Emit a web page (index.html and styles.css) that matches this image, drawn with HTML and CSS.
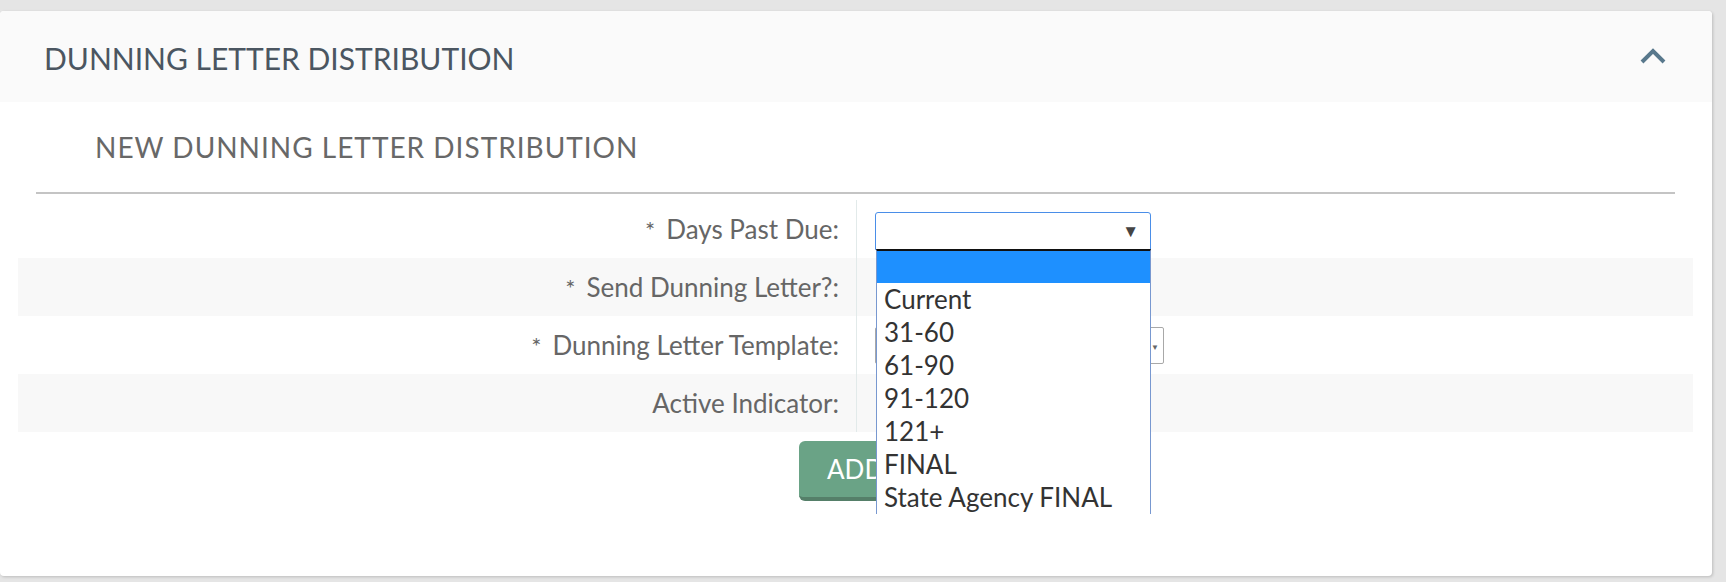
FILE: index.html
```html
<!DOCTYPE html>
<html lang="en">
<head>
  <meta charset="UTF-8">
  <meta name="viewport" content="width=device-width, initial-scale=1.0">
  <title>Dunning Letter Distribution</title>
  <link rel="stylesheet" href="styles.css">
</head>
<body>
  <div class="panel">
    <div class="panel-head">
      <h2>DUNNING LETTER DISTRIBUTION</h2>
      <svg class="chevron" width="26" height="16" viewBox="0 0 26 16">
        <path d="M2 14 L13 3 L24 14" fill="none" stroke="#58788c" stroke-width="4"/>
      </svg>
    </div>
    <div class="panel-body">
      <h3 class="sub-title">NEW DUNNING LETTER DISTRIBUTION</h3>
      <div class="form">
        <div class="row">
          <div class="label"><span class="req">*</span>Days Past Due:</div>
          <div class="field">
            <div class="select-wrap">
              <div class="select focused"><span class="arrow">&#9660;</span></div>
              <ul class="dropdown">
                <li class="active">&nbsp;</li>
                <li>Current</li>
                <li>31-60</li>
                <li>61-90</li>
                <li>91-120</li>
                <li>121+</li>
                <li>FINAL</li>
                <li>State Agency FINAL</li>
                <li>Collections</li>
              </ul>
            </div>
          </div>
        </div>
        <div class="row alt">
          <div class="label"><span class="req">*</span>Send Dunning Letter?:</div>
          <div class="field"></div>
        </div>
        <div class="row">
          <div class="label"><span class="req">*</span>Dunning Letter Template:</div>
          <div class="field">
            <div class="select wide"><span class="arrow small">&#9660;</span></div>
          </div>
        </div>
        <div class="row alt">
          <div class="label">Active Indicator:</div>
          <div class="field"></div>
        </div>
        <div class="actions">
          <button type="button">ADD</button>
        </div>
      </div>
    </div>
  </div>
</body>
</html>
```

FILE: styles.css
```css
body {
  background-color: #e5e5e5;
  font-family: Lato, "Open Sans", sans-serif;
  margin: 0;
  padding: 11px 14px 6px 0;
}
.panel {
  background-color: white;
  border-radius: 4px;
  box-shadow: 1px 1px 3px rgba(0, 0, 0, 0.18);
  height: 565px;
  overflow: hidden;
}
.panel-head {
  background-color: #fafafa;
  height: 91px;
  padding: 0 46px 0 44px;
  display: flex;
  align-items: center;
  justify-content: space-between;
}
.panel-head h2 {
  margin: 0;
  font-size: 30px;
  font-weight: normal;
  color: #4b5661;
  padding-top: 3px;
}
.chevron { margin-bottom: 1px; }
.panel-body { padding: 0 19px 0 18px; }
.sub-title {
  margin: 0 18px;
  padding: 28px 0 0 59px;
  height: 62px;
  font-size: 28px;
  font-weight: normal;
  letter-spacing: 1px;
  color: #686868;
  border-bottom: 2px solid #c4c4c4;
}
.form { padding-top: 6px; }
.row {
  display: grid;
  grid-template-columns: 838px 1fr;
  height: 58px;
}
.row.alt { background-color: #f8f8f8; }
.label {
  text-align: right;
  padding-right: 17px;
  font-size: 26px;
  color: #666;
  line-height: 58px;
}
.req { margin-right: 11px; font-size: 24px; }
.field {
  border-left: 1px solid #e2eaea;
  padding-left: 18px;
  display: flex;
  align-items: center;
}
.select-wrap { position: relative; }
.select {
  width: 274px;
  height: 36px;
  border: 1px solid #aaa;
  border-radius: 2px;
  background-color: white;
  position: relative;
}
.select.focused {
  border: 1px solid #4a8ee8;
  border-radius: 3px 3px 0 0;
  margin-top: 2px;
}
.select.wide { width: 287px; height: 35px; border-color: #a8a8a8; }
.arrow {
  position: absolute;
  right: 11px;
  top: 7px;
  font-size: 17px;
  color: #444;
}
.arrow.small { right: 4px; font-size: 8px; top: 14px; color: #666; }
.dropdown {
  position: absolute;
  top: 39px;
  left: 1px;
  width: 273px;
  height: 263px;
  margin: 0;
  padding: 0;
  list-style: none;
  background-color: white;
  border-top: 2px solid #111;
  border-left: 1px solid #7898d0;
  border-right: 1px solid #7898d0;
  overflow: hidden;
  z-index: 2;
}
.dropdown li {
  height: 33px;
  line-height: 33px;
  padding-left: 7px;
  font-size: 26px;
  color: #333;
  white-space: nowrap;
}
.dropdown li.active { background-color: #1e90ff; height: 32px; }
.actions { text-align: center; padding-top: 9px; }
button {
  background-color: #6aa386;
  color: white;
  border: none;
  border-bottom: 4px solid #557f69;
  border-radius: 6px;
  font-family: Lato, sans-serif;
  font-size: 26px;
  padding: 0 28px;
  height: 60px;
  width: 114px;
  margin-left: 1px;
  text-align: left;
}
```
